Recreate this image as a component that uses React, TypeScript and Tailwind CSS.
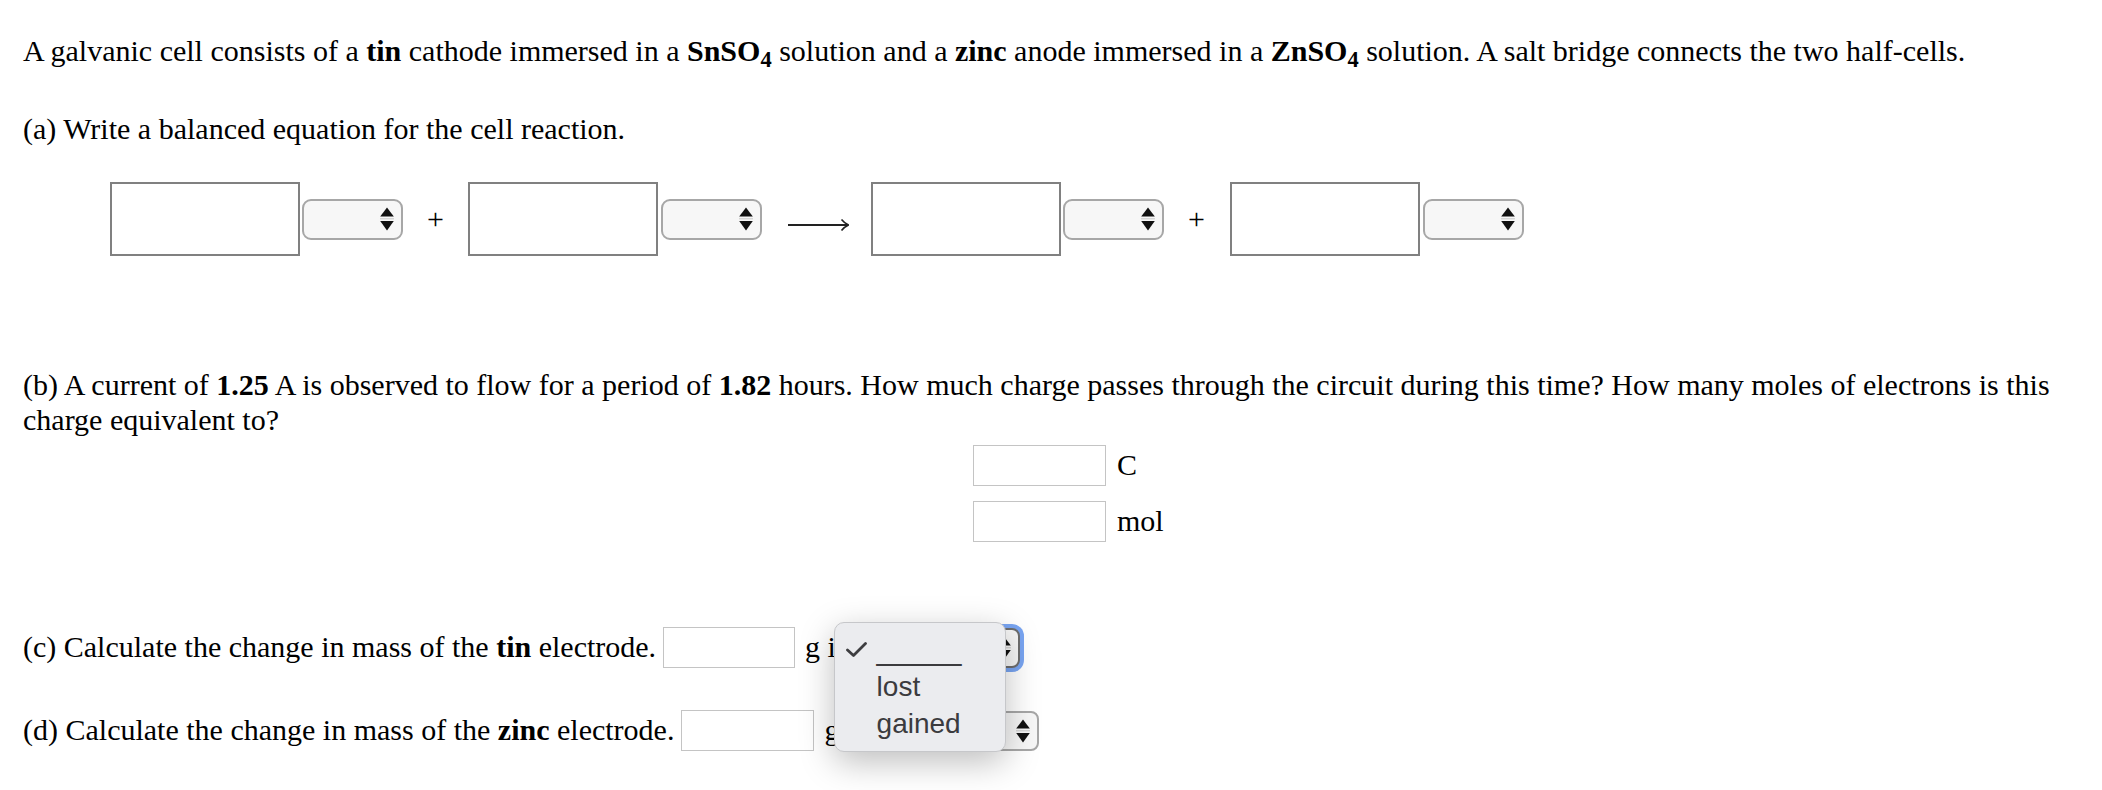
import React from "react";

function Stepper() {
  return (
    <svg width="14" height="24" viewBox="0 0 14 24" className="shrink-0">
      <polygon points="7,0.5 13.8,9.5 0.2,9.5" fill="#111" />
      <line x1="0" y1="11.8" x2="14" y2="11.8" stroke="#c8c8c8" strokeWidth="1" />
      <polygon points="0.2,14 13.8,14 7,23.5" fill="#111" />
    </svg>
  );
}

function Box({ className = "" }: { className?: string }) {
  return (
    <input
      type="text"
      className={
        "block w-[190px] h-[74px] border-2 border-[#808080] bg-white outline-none shrink-0 " +
        className
      }
    />
  );
}

function EqSelect({ className = "" }: { className?: string }) {
  return (
    <div
      className={
        "w-[101px] h-[41px] rounded-[9px] border-2 border-[#a7a7a7] bg-[#f7f7f7] flex items-center justify-end pr-[7px] shrink-0 " +
        className
      }
    >
      <Stepper />
    </div>
  );
}

function Arrow() {
  return (
    <svg width="61" height="14" viewBox="0 0 61 14" className="ml-[26px] mt-[12px] shrink-0">
      <line x1="0" y1="7" x2="59.5" y2="7" stroke="#222" strokeWidth="2" />
      <path d="M53.5 1.5 Q56.5 5.2 60.5 7 Q56.5 8.8 53.5 12.5" fill="none" stroke="#222" strokeWidth="1.6" />
    </svg>
  );
}

function SmallInput({ w, className = "" }: { w: string; className?: string }) {
  return (
    <input
      type="text"
      className={
        "block h-[41px] border-[1.5px] border-[#c4c4c4] bg-white outline-none shrink-0 " + w + " " + className
      }
    />
  );
}

export default function App() {
  return (
    <div className="w-[2102px] h-[790px] overflow-hidden bg-white text-black font-['Liberation_Serif','Times_New_Roman',serif]">
      <div className="px-[23px] pt-[34px] text-[30px] leading-[34.5px]">
        <p>
          A galvanic cell consists of a <b>tin</b> cathode immersed in a{" "}
          <b>
            SnSO<sub>4</sub>
          </b>{" "}
          solution and a <b>zinc</b> anode immersed in a{" "}
          <b>
            ZnSO<sub>4</sub>
          </b>{" "}
          solution. A salt bridge connects the two half-cells.
        </p>

        <p className="mt-[43.5px]">(a) Write a balanced equation for the cell reaction.</p>

        <div className="mt-[35.5px] h-[74px] flex items-center pl-[87px]">
          <Box />
          <EqSelect className="ml-[2px]" />
          <span className="ml-[24px] w-[17px] text-center">+</span>
          <Box className="ml-[24px]" />
          <EqSelect className="ml-[3px]" />
          <Arrow />
          <Box className="ml-[22px]" />
          <EqSelect className="ml-[2px]" />
          <span className="ml-[24px] w-[17px] text-center">+</span>
          <Box className="ml-[25px]" />
          <EqSelect className="ml-[3px]" />
        </div>

        <p className="mt-[112px]">
          (b) A current of <b>1.25</b> A is observed to flow for a period of <b>1.82</b> hours. How much
          charge passes through the circuit during this time? How many moles of electrons is this charge
          equivalent to?
        </p>

        <div className="mt-[8px] pl-[950px] flex flex-col gap-[15px]">
          <div className="flex items-center gap-[11px]">
            <SmallInput w="w-[133px]" />
            <span>C</span>
          </div>
          <div className="flex items-center gap-[11px]">
            <SmallInput w="w-[133px]" />
            <span>mol</span>
          </div>
        </div>

        <div className="mt-[85px] h-[41px] flex items-center">
          <span>
            (c) Calculate the change in mass of the <b>tin</b> electrode.
          </span>
          <SmallInput w="w-[132px]" className="ml-[7px]" />
          <span className="ml-[10px]">g is</span>
          <div className="relative shrink-0 ml-[10px]">
            <div className="w-[162px] h-[40px] rounded-[8px] border-2 border-[#6e6e6e] bg-[#f7f7f7] ring-[4px] ring-[#79a5f2] flex items-center justify-end pr-[7px]">
              <Stepper />
            </div>
            <div className="absolute left-[-24px] top-[-6px] w-[172px] h-[130px] rounded-[10px] border border-[#c6c7ca] bg-[#ebecef] shadow-[0_10px_34px_rgba(0,0,0,0.26)] pt-[8px] font-['Liberation_Sans',Arial,sans-serif] text-[28px] leading-[37px] text-[#3b3b3e] z-10">
              <div className="flex items-center h-[37px]">
                <div className="w-[42px] flex items-center pl-[11px]">
                  <svg width="21" height="15" viewBox="0 0 21 15">
                    <path d="M1.5 8 L7.5 13.5 L19.5 1.5" fill="none" stroke="#3d3d40" strokeWidth="2.8" strokeLinecap="round" strokeLinejoin="round" />
                  </svg>
                </div>
                <span className="text-[30.5px]">_____</span>
              </div>
              <div className="flex items-center h-[37px]">
                <div className="w-[42px]" />
                <span>lost</span>
              </div>
              <div className="flex items-center h-[37px]">
                <div className="w-[42px]" />
                <span>gained</span>
              </div>
            </div>
          </div>
        </div>

        <div className="mt-[42px] h-[41px] flex items-center">
          <span>
            (d) Calculate the change in mass of the <b>zinc</b> electrode.
          </span>
          <SmallInput w="w-[133px]" className="ml-[7px]" />
          <span className="ml-[10px]">g is</span>
          <div className="ml-[10px] w-[162px] h-[40px] rounded-[8px] border-2 border-[#a7a7a7] bg-[#f7f7f7] flex items-center justify-end pr-[7px] shrink-0">
            <Stepper />
          </div>
        </div>
      </div>
    </div>
  );
}
